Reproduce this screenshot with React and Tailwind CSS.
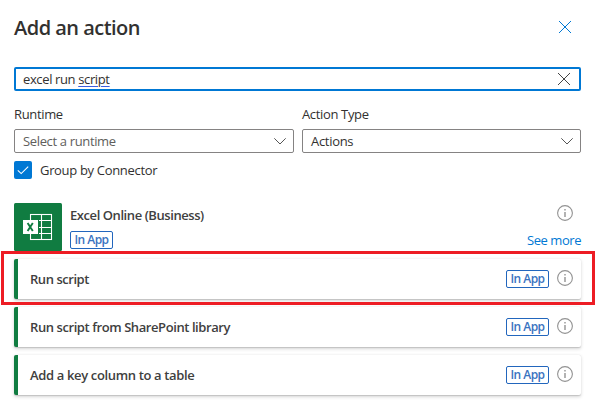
const actions = [
  { name: 'Run script', tracking: 'tracking-[-0.45px]' },
  { name: 'Run script from SharePoint library', tracking: 'tracking-[-0.42px]' },
  { name: 'Add a key column to a table', tracking: 'tracking-[-0.35px]' },
];

function CloseIcon({ className }) {
  return (
    <svg className={className} width="12" height="12" viewBox="0 0 12 12" fill="none" stroke="currentColor">
      <path d="M0 0L12 12M12 0L0 12" />
    </svg>
  );
}

function ChevronIcon() {
  return (
    <svg className="mt-px text-[#555]" width="12" height="7" viewBox="0 0 12 7" fill="none" stroke="currentColor">
      <path d="M0.3 0.3L6 6L11.7 0.3" />
    </svg>
  );
}

function InfoIcon() {
  return (
    <svg className="shrink-0 text-[#929292]" width="16" height="16" viewBox="0 0 16 16" fill="none" stroke="currentColor">
      <circle cx="8" cy="8" r="7.4" strokeWidth="1.1" />
      <path d="M8 7V12" strokeWidth="1.4" />
      <path d="M8 4V5.5" strokeWidth="1.4" />
    </svg>
  );
}

function ExcelIcon() {
  return (
    <svg className="shrink-0" width="48" height="48" viewBox="0 0 48 48">
      <rect width="48" height="48" rx="1.5" fill="#107c41" />
      <g fill="none" stroke="#fff" strokeWidth="1.1">
        <rect x="16.5" y="11.5" width="21" height="25" />
        <path d="M27.5 11.5V36.5M16.5 17.5H37.5M16.5 24.5H37.5M16.5 30.5H37.5" />
      </g>
      <rect x="9" y="17" width="15" height="14" fill="#fff" />
      <path d="M24.5 17V31" stroke="#107c41" />
      <path d="M13.6 20L18.8 28M18.8 20L13.6 28" stroke="#107c41" strokeWidth="1.9" />
    </svg>
  );
}

function Badge() {
  return (
    <span className="flex h-[18px] w-[43px] shrink-0 items-center justify-center whitespace-nowrap rounded-[2px] border border-[#2266bd] text-[12px] font-semibold leading-4 tracking-[-0.55px] text-[#3a73bf]">
      In App
    </span>
  );
}

function Select({ label, value, className, valueClass }) {
  return (
    <div className={className}>
      <div className="h-5 text-[13px] leading-5 tracking-[-0.35px]">{label}</div>
      <div className="mt-[5px] flex h-6 items-center justify-between rounded-[2px] border border-[#858383] pl-2 pr-[7px]">
        <span className={valueClass}>{value}</span>
        <ChevronIcon />
      </div>
    </div>
  );
}

export default function App() {
  return (
    <div className="relative h-[411px] w-[596px] overflow-hidden bg-white pl-[14px] pr-[15px] font-['Open_Sans','Noto_Sans',sans-serif] text-[13px] text-[#323130]">
      <header className="flex h-[67px] items-start justify-between pr-[10px]">
        <h1 className="mt-[14px] whitespace-nowrap text-[20px] font-semibold leading-7 tracking-[-0.52px]">Add an action</h1>
        <CloseIcon className="mt-[21px] text-[#0078d4]" />
      </header>

      <div className="flex h-6 items-center justify-between rounded-[2px] border-2 border-[#0078d4] pl-[7px] pr-[9px]">
        <span className="text-[13px] leading-[18px] tracking-[-0.37px]">
          excel run <span className="underline decoration-[#3c5ee0] decoration-1 underline-offset-2">script</span>
        </span>
        <CloseIcon className="text-[#444]" />
      </div>

      <div className="mt-[13px] flex gap-2">
        <Select label="Runtime" value="Select a runtime" className="w-[280px]" valueClass="text-[13px] leading-[18px] tracking-[-0.35px] text-[#605e5c]" />
        <Select label="Action Type" value="Actions" className="w-[279px]" valueClass="text-[13px] leading-[18px] tracking-[-0.3px]" />
      </div>

      <div className="mt-2 flex h-[18px] items-center gap-2">
        <span className="flex size-[18px] items-center justify-center rounded-[2px] bg-[#0078d4]">
          <svg width="12" height="9" viewBox="0 0 12 9" fill="none" stroke="#fff" strokeWidth="1.1">
            <path d="M0.8 4.3L4.2 7.6L11.2 0.6" />
          </svg>
        </span>
        <span className="leading-[18px] tracking-[-0.32px]">Group by Connector</span>
      </div>

      <section className="mt-6 flex h-12 gap-2">
        <ExcelIcon />
        <div className="flex-1">
          <h2 className="mt-[2px] h-5 whitespace-nowrap text-[13px] font-semibold leading-5 tracking-[-0.43px] text-[#404040]">Excel Online (Business)</h2>
          <div className="mt-[6px]"><Badge /></div>
        </div>
        <div className="flex flex-col items-end">
          <div className="mr-2 mt-[2px]"><InfoIcon /></div>
          <a className="mt-[9px] whitespace-nowrap text-[13px] leading-5 tracking-[-0.45px] text-[#0078d4]">See more</a>
        </div>
      </section>

      <ul className="mt-2 flex flex-col gap-2">
        {actions.map(({ name, tracking }) => (
          <li key={name} className="flex h-10 items-center rounded-[2px] border-l-4 border-[#107c41] bg-white pl-3 pr-2 shadow-[0_1.6px_3.6px_rgba(0,0,0,0.16),0_0.3px_0.9px_rgba(0,0,0,0.12)]">
            <span className={`flex-1 whitespace-nowrap text-[13px] font-semibold leading-5 text-[#404040] ${tracking}`}>{name}</span>
            <Badge />
            <span className="mb-[2px] ml-2"><InfoIcon /></span>
          </li>
        ))}
      </ul>
      <div className="pointer-events-none absolute left-px top-[251px] h-[54px] w-[594px] border-[3px] border-[#ed1c24]" />
    </div>
  );
}
